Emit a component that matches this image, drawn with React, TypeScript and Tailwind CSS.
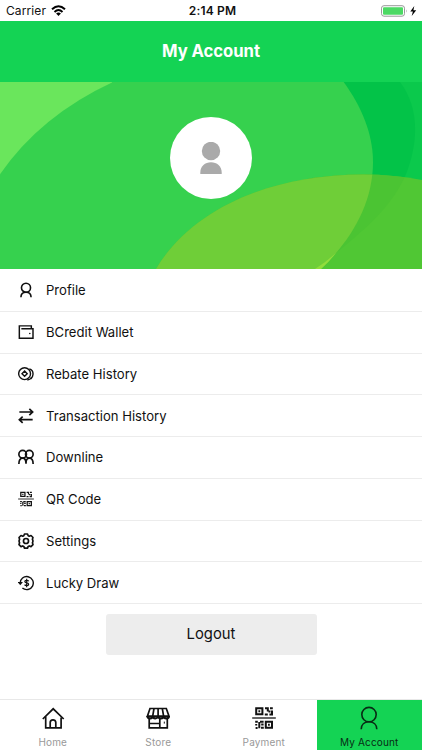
import type { ReactNode } from 'react';

function Icon({ children, className, sw = 1.7 }: { children: ReactNode; className: string; sw?: number }) {
  return (
    <svg viewBox="0 0 24 24" className={className} fill="none" stroke="currentColor" strokeWidth={sw}>
      {children}
    </svg>
  );
}

const person = (
  <>
    <circle cx="12" cy="8.6" r="7.2" />
    <path d="M4.2 23.2c0-4.7 3.2-7.4 7.8-7.4s7.8 2.7 7.8 7.4" />
  </>
);

const qr = (
  <>
    <path d="M4.2 2.2h6.2v6H4.2zM13.8 15.8H20v6h-6.2z" />
    <path d="M6.4 5.2h1.8M16 18.8h1.8" />
    <path d="M13 2.2h2.8v3.2M18 2.2h2.8M20 4.5v4h-2.6M12.8 8.4h3M16.5 5.4h2" />
    <path d="M3.2 15.8h2.6M8 15.8h3.6M4.2 18v1.5M7.3 16v6.3M9.2 18.6h2.4M9 21.8h2.8M3.6 22h2" />
    <path d="M.2 12h23.6" strokeWidth="1.3" />
  </>
);

const rows: { label: string; icon: ReactNode }[] = [
  { label: 'Profile', icon: <Icon className="size-4" sw={2.4}>
    <circle cx="12" cy="8.6" r="6.8" />
    <path d="M4.4 23c0-4.8 3-7.6 7.6-7.6s7.6 2.8 7.6 7.6" />
  </Icon> },
  { label: 'BCredit Wallet', icon: <Icon className="size-4" sw={2.2}>
    <path d="M20 7V2.8H2v18.7h20.5V7H5" />
    <circle cx="17.7" cy="14.2" r="1.2" fill="currentColor" stroke="none" />
  </Icon> },
  { label: 'Rebate History', icon: <Icon className="size-4" sw={2.1}>
    <circle cx="9.9" cy="11.5" r="8.9" />
    <path d="M9.9 7.6l3.9 3.9-3.9 3.9L6 11.5z" />
    <path d="M17 4.4c7.6 2.4 8 14.5-3 16.6M18.6 17.5l2.2 1.6" />
  </Icon> },
  { label: 'Transaction History', icon: <Icon className="size-4" sw={2.5}>
    <path d="M2 6h20M17 1.3L22 6l-5 4.7M22 17.5H2M7 12.8l-5 4.7 5 4.7" />
  </Icon> },
  { label: 'Downline', icon: <Icon className="size-4" sw={2.5}>
    <circle cx="7" cy="7.8" r="5.7" /><circle cx="17" cy="7.8" r="5.7" />
    <path d="M1.3 22.5c0-5.5 1.8-8.8 5.7-8.8s5 3.3 5 8.3c0-5 1.1-8.3 5-8.3s5.7 3.3 5.7 8.8" />
  </Icon> },
  { label: 'QR Code', icon: <Icon className="size-4" sw={1.9}>{qr}</Icon> },
  { label: 'Settings', icon: <Icon className="size-4" sw={2.5}>
    <path strokeLinejoin="round" d="M9.7 1.5h4.6l1 2.6 1.6.7 2.6-1 3 3-.9 2.7.7 1.6v2l-.7 1.6.9 2.7-3 3-2.6-1-1.6.7-1 2.6H9.7l-1-2.6-1.6-.7-2.6 1-3-3 .9-2.7-.7-1.6v-2l.7-1.6-.9-2.7 3-3 2.6 1 1.6-.7z" />
    <circle cx="12" cy="12" r="3.8" />
  </Icon> },
  { label: 'Lucky Draw', icon: <Icon className="size-4" sw={2.1}>
    <path d="M3.3 12.5a9.8 9.8 0 1 1 3.3 7" />
    <path d="M-.5 10.5h7.9l-4 5z" fill="currentColor" stroke="none" />
    <path d="M16 9.3c-1-1.9-5.8-1.7-5.8.6 0 2.7 5.8 1.3 5.8 4 0 2.6-5 2.6-6.1.5M13 5.8v12.4" strokeWidth="1.8" />
  </Icon> },
];

const tabs: { label: string; icon: ReactNode; active?: boolean }[] = [
  { label: 'Home', icon: <Icon className="size-6" sw={1.7}>
    <path d="M1.8 13L12.2 2.8 22.7 13" />
    <path d="M4.7 10.5v11.3h15.4V11.5M9.2 21.5v-5c0-3.6 5.6-3.6 5.6 0v5" />
  </Icon> },
  { label: 'Store', icon: <Icon className="size-6" sw={1.7}>
    <path d="M4 2.5h16.3l2.7 7.7H1.4z" />
    <path d="M8 2.5l-1.3 7.7M12.1 2.5v7.7M16.3 2.5l1.3 7.7" />
    <path d="M1.4 10c0 3.2 5.3 3.2 5.3 0 0 3.2 5.4 3.2 5.4 0 0 3.2 5.5 3.2 5.5 0 0 3.2 5.4 3.2 5.4 0" strokeWidth="2.1" />
    <path d="M3.2 12v9.8h18.1V12M13.8 13v8.5M4 17.5h9.5" />
    <path d="M18.3 15.6v2" strokeWidth="1" />
  </Icon> },
  { label: 'Payment', icon: <Icon className="size-6" sw={2}>{qr}</Icon> },
  { label: 'My Account', icon: <Icon className="size-6" sw={1.6}>{person}</Icon>, active: true },
];

function Banner() {
  const main = 'M-10 190Q31 120 113 82L343.7 82C361 106 373 133 373 162C373 202 353 238 321 269L-10 269Z';
  const lime = 'M156 269C191 210 269 174.5 363 174.5Q394 174.5 422 180V269Z';
  const dark = 'M300 82h100C419 107 419 141 406 174C393 205 367 230 315 269Z';
  return (
    <svg viewBox="0 82 422 187" className="col-start-1 row-start-1 size-full" preserveAspectRatio="none">
      <defs>
        <clipPath id="main"><path d={main} /></clipPath>
        <clipPath id="lime"><path d={lime} /></clipPath>
      </defs>
      <path d="M0 82h422v187H0z" fill="#0bc94c" />
      <path d={dark} fill="#03c348" />
      <path d="M0 82h113L0 190z" fill="#6ae65c" />
      <path d={main} fill="#36d14e" />
      <path d={lime} fill="#50c734" />
      <path d={dark} fill="#4bc433" clipPath="url(#lime)" />
      <path d={lime} fill="#6fce38" clipPath="url(#main)" />
      <path d="M315 269Q326 262 336 253Q329 262 321 269Z" fill="#91dd3d" />
    </svg>
  );
}

export default function App() {
  return (
    <div className="flex h-[750px] w-[422px] flex-col overflow-hidden bg-white font-['Inter',sans-serif] text-[#111]">
      <div className="grid h-[21px] shrink-0 grid-cols-3 items-center text-[12px] text-[#111]">
        <div className="flex items-center gap-[5px] pl-[6px]">
          <span className="pt-px tracking-[0.1px]">Carrier</span>
          <svg viewBox="0 0 15 11" className="h-[11px] w-[15px]" fill="none" stroke="#000" strokeWidth="2">
            <path d="M1 4.2Q7.5-1.7 14 4.2M3.5 6.9Q7.5 3.2 11.5 6.9" />
            <path d="M5.1 8.5Q7.5 6.5 9.9 8.5L7.5 11z" fill="#000" stroke="none" />
          </svg>
        </div>
        <span className="pt-px pl-[3px] text-center font-semibold tracking-[0.15px]">2:14 PM</span>
        <div className="flex items-center justify-end pr-[5px]">
          <svg viewBox="0 0 36 12" className="h-3 w-9">
            <rect x=".5" y=".7" width="23" height="10.5" rx="2.5" fill="white" stroke="#999" />
            <rect x="2" y="2.2" width="20" height="7.5" rx="1" fill="#4cd964" />
            <path d="M25 4.2q1.3 1.8 0 3.6z" fill="#999" />
            <path d="M33.3 1L29.3 6.4h2.6L30.7 11l4.5-5.7h-2.8z" fill="#000" />
          </svg>
        </div>
      </div>
      <header className="flex h-[61px] shrink-0 items-center justify-center bg-[#14d354] pt-px text-[16.7px] font-bold text-white">
        <h1 className="tracking-[-0.05px]">My Account</h1>
      </header>
      <section className="grid h-[187px] shrink-0 grid-cols-1 grid-rows-1">
        <Banner />
        <div className="z-10 col-start-1 row-start-1 mt-[35px] flex size-[82px] items-center justify-center justify-self-center rounded-full bg-white">
          <svg viewBox="0 0 22 32" className="mt-[-1px] h-8 w-[22px]" fill="#aaa">
            <circle cx="11" cy="9" r="9.2" />
            <path d="M.3 32v-1.5C.3 24.3 5.1 20.3 11 20.3s10.7 4 10.7 10.2V32z" />
          </svg>
        </div>
      </section>
      <nav className="shrink-0 pt-px">
        {rows.map((r) => (
          <div key={r.label} className="flex h-[41.75px] items-center border-b border-[#ececec] pl-[18px] text-[13.1px]">
            {r.icon}
            <span className="pt-[1.5px] pl-3">{r.label}</span>
          </div>
        ))}
      </nav>
      <button className="mt-[10px] h-[41px] w-[211px] shrink-0 self-center rounded-[3px] bg-[#ededed] text-[14.8px]">Logout</button>
      <footer className="mt-auto grid h-[51px] grid-cols-4 border-t border-[#e8e8e8]">
        {tabs.map((t) => (
          <div key={t.label} className={t.active ? 'flex flex-col items-center bg-[#14d354] pt-[6px] text-[#082c14]' : 'flex flex-col items-center pt-[6px] text-[#111]'}>
            {t.icon}
            <span className={t.active ? 'mt-[5px] text-[10px] leading-[14px] tracking-[0.15px]' : 'mt-[5px] text-[10px] leading-[14px] tracking-[0.15px] text-[#999]'}>{t.label}</span>
          </div>
        ))}
      </footer>
    </div>
  );
}
